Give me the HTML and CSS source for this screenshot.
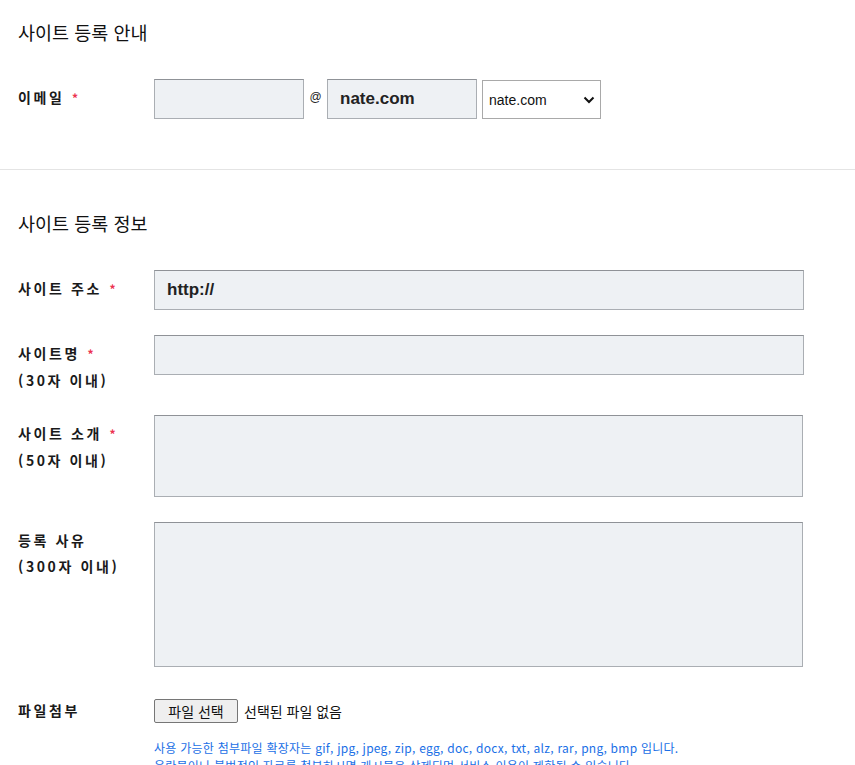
FILE: index.html
```html
<!DOCTYPE html>
<html lang="ko">
<head>
    <meta charset="UTF-8">
    <meta name="viewport" content="width=device-width, initial-scale=1.0">
    <title>사이트 등록</title>
    <link rel="stylesheet" href="styles.css">
</head>
<body>

<div class="section section-guide">
    <h2>사이트 등록 안내</h2>

    <div class="row">
        <label class="field-label" for="email-id">이메일 <span class="req">*</span></label>
        <div class="email-group">
            <input type="text" id="email-id" class="box email-input">
            <span class="at">@</span>
            <input type="text" id="email-domain" class="box email-input domain" value="nate.com" readonly>
            <div class="select-wrap">
                <select id="domain-select" class="domain-select">
                    <option value="nate.com" selected>nate.com</option>
                    <option value="naver.com">naver.com</option>
                    <option value="direct">직접입력</option>
                </select>
                <svg class="chevron" width="12" height="8" viewBox="0 0 12 8">
                    <path d="M1.5 1.5 L6 6 L10.5 1.5" fill="none" stroke="#111" stroke-width="2"/>
                </svg>
            </div>
        </div>
    </div>
</div>

<div class="section section-info">
    <h2>사이트 등록 정보</h2>

    <div class="row">
        <label class="field-label" for="site-url">사이트 주소 <span class="req">*</span></label>
        <input type="text" id="site-url" class="box wide url" value="http://">
    </div>

    <div class="row row-tight">
        <label class="field-label" for="site-name">사이트명 <span class="req">*</span><br>(30자 이내)</label>
        <input type="text" id="site-name" class="box wide">
    </div>

    <div class="row">
        <label class="field-label" for="site-desc">사이트 소개 <span class="req">*</span><br>(50자 이내)</label>
        <textarea id="site-desc" class="box wide area-short"></textarea>
    </div>

    <div class="row">
        <label class="field-label" for="site-reason">등록 사유<br>(300자 이내)</label>
        <textarea id="site-reason" class="box wide area-long"></textarea>
    </div>

    <div class="row">
        <span class="field-label">파일첨부</span>
        <div class="file-group">
            <div class="file-line">
                <label class="file-btn" for="attach">파일 선택</label>
                <input type="file" id="attach" class="file-hidden">
                <span class="file-name">선택된 파일 없음</span>
            </div>
            <p class="help">사용 가능한 첨부파일 확장자는 gif, jpg, jpeg, zip, egg, doc, docx, txt, alz, rar, png, bmp 입니다.</p>
            <p class="help">음란물이나 불법적인 자료를 첨부하시면 게시물은 삭제되며 서비스 이용이 제한될 수 있습니다.</p>
        </div>
    </div>
</div>

</body>
</html>
```

FILE: styles.css
```css
body {
    margin: 0;
    font-family: "Noto Sans CJK KR", "Noto Sans", sans-serif;
    color: #111;
    background-color: #fff;
}

.section {
    padding: 0 18px;
}

.section-guide {
    padding-top: 20px;
    padding-bottom: 25px;
    border-bottom: 1px solid #e4e4e4;
}

.section-info {
    padding-top: 41px;
}

h2 {
    font-size: 18.5px;
    font-weight: normal;
    line-height: 24px;
    margin: 0 0 35px;
    color: #111;
}

.row {
    display: flex;
    align-items: flex-start;
    margin-bottom: 25px;
}

.row-tight {
    margin-bottom: 22px;
}

.field-label {
    width: 136px;
    flex-shrink: 0;
    padding-top: 5px;
    font-size: 14px;
    font-weight: bold;
    line-height: 26px;
    letter-spacing: 2.6px;
    color: #1a1a1a;
}

.req {
    color: #ec3350;
    font-size: 12px;
    margin-left: 1px;
}

.box {
    box-sizing: border-box;
    height: 40px;
    border: 1px solid #aaaeb3;
    border-top-color: #8f9297;
    background-color: #eef1f4;
    padding: 0 12px;
    margin: 0;
    border-radius: 0;
    font-family: "Liberation Sans", Arial, sans-serif;
    font-size: 17px;
    font-weight: bold;
    color: #222;
    outline: none;
}

.email-group {
    display: flex;
    align-items: center;
}

.email-input {
    width: 150px;
}

.at {
    width: 23px;
    text-align: center;
    font-family: "Liberation Sans", Arial, sans-serif;
    font-size: 12px;
    margin-top: -4px;
    color: #222;
}

.select-wrap {
    position: relative;
    margin-left: 5px;
    margin-top: 1px;
}

.domain-select {
    display: block;
    box-sizing: border-box;
    width: 119px;
    height: 39px;
    border: 1px solid #a9a9a9;
    background-color: #fff;
    font-family: "Liberation Sans", Arial, sans-serif;
    font-size: 14px;
    color: #111;
    padding: 0 6px;
    border-radius: 0;
    appearance: none;
    -webkit-appearance: none;
}

.chevron {
    position: absolute;
    right: 6px;
    top: 16px;
    pointer-events: none;
}

.wide {
    width: 650px;
}

textarea.box {
    resize: none;
    display: block;
    width: 649px;
}

.area-short {
    height: 82px;
}

.area-long {
    height: 145px;
}

.file-group {
    padding-top: 7px;
}

.file-line {
    display: flex;
    align-items: center;
}

.file-btn {
    box-sizing: border-box;
    height: 24px;
    width: 84px;
    padding: 0;
    border: 1px solid #767676;
    border-radius: 2px;
    background-color: #efefef;
    font-size: 14px;
    line-height: 22px;
    text-align: center;
    color: #111;
}

.file-hidden {
    display: none;
}

.file-name {
    margin-left: 6px;
    font-size: 14px;
    color: #111;
}

.help {
    margin: 0;
    font-size: 12px;
    line-height: 18px;
    letter-spacing: 0.25px;
    color: #1a6fe6;
    white-space: nowrap;
}

.file-line + .help {
    margin-top: 16px;
}
```
